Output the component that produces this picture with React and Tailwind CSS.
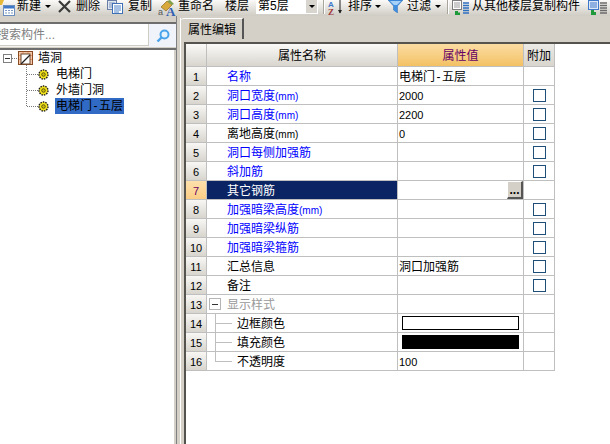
import React from "react";

const FONT = { fontFamily: '"Liberation Sans","Noto Sans CJK SC",sans-serif' };

function Caret({ className = "" }) {
  return <span className={"w-0 h-0 border-x-[3px] border-x-transparent border-t-[3px] border-t-black " + className} />;
}

function Sep({ className = "" }) {
  return <span className={"w-[2px] h-[14px] border-l border-[#a8a59c] bg-white " + className} />;
}

function NewIcon() {
  return (
    <svg width="15" height="16" viewBox="0 0 15 16" className="shrink-0">
      <path d="M0 0h4l-2 5H0z" fill="#e8b838" />
      <rect x="3.5" y="5.5" width="11" height="10" fill="#fff" stroke="#6d8fc0" />
      <rect x="4" y="6" width="10" height="2.5" fill="#3f78c8" />
      <path d="M5 10h2v1H5zM8 10h2v1H8zM11 10h2v1h-2zM5 12.500h2v1H5zM8 12.500h2v1H8zM11 12.500h2v1h-2z" fill="#7c97c4" />
    </svg>
  );
}

function XIcon() {
  return (
    <svg width="13" height="13" viewBox="0 0 13 13" className="shrink-0">
      <path d="M1 1l11 11M12 1L1 12" stroke="#3a3a3a" strokeWidth="2.200" />
    </svg>
  );
}

function CopyIcon() {
  return (
    <svg width="16" height="14" viewBox="0 0 16 14" className="shrink-0">
      <rect x="0.500" y="0.500" width="9" height="9" fill="#dfe6f2" stroke="#6a7fa6" />
      <path d="M2 3h6M2 5h6M2 7h4" stroke="#7f93b8" />
      <rect x="5.500" y="3.500" width="10" height="10" fill="#fff" stroke="#3f6fb5" />
      <path d="M7 6h7M7 8h7M7 10h7M7 12h5" stroke="#4f82c8" />
    </svg>
  );
}

function RenameIcon() {
  return (
    <svg width="18" height="16" viewBox="0 0 18 16" className="shrink-0">
      <path d="M3 7l6-6 5 4-6 6z" fill="#d8a93a" stroke="#8d6d24" strokeWidth="0.700" />
      <path d="M9 1l5 4 2-1-4-4z" fill="#7f9f4a" />
      <text x="0" y="15" fontSize="9" fill="#555" fontFamily="Liberation Sans">a</text>
      <text x="8" y="16" fontSize="13" fontWeight="700" fill="#2f5fb3" fontFamily="Liberation Serif">A</text>
    </svg>
  );
}

function SortIcon() {
  return (
    <svg width="15" height="15" viewBox="0 0 15 15" className="shrink-0">
      <text x="0" y="7" fontSize="8" fontWeight="700" fill="#3f78c8" fontFamily="Liberation Sans">A</text>
      <text x="0" y="15" fontSize="9" fontWeight="700" fill="#a03838" fontFamily="Liberation Serif">Z</text>
      <path d="M12 0v13" stroke="#222" />
      <path d="M10 10l2 3.500 2-3.500z" fill="#222" />
    </svg>
  );
}

function FunnelIcon() {
  return (
    <svg width="15" height="13" viewBox="0 0 15 13" className="shrink-0">
      <path d="M0 0h15L9.500 6v7L5.500 10V6z" fill="#3f8fe0" stroke="#2f6fb8" strokeWidth="0.500" />
      <path d="M2 1h11L9 5H6z" fill="#a7d2f7" />
    </svg>
  );
}

function FloorCopyIcon() {
  return (
    <svg width="18" height="15" viewBox="0 0 18 15" className="shrink-0">
      <rect x="0.500" y="0.500" width="9" height="9" fill="#fff" stroke="#7d7d7d" />
      <path d="M2 3h6M2 5h6M2 7h6" stroke="#9a9a9a" />
      <path d="M11 3h6M11 5.500h6M11 8h6M11 10.500h6M11 13h6" stroke="#2f6fc0" strokeWidth="1.400" />
      <path d="M3 11h3v1.500h2V15H3z" fill="#1e9a3a" />
    </svg>
  );
}

function FloorCopyIconGray() {
  return (
    <svg width="20" height="15" viewBox="0 0 20 15" className="shrink-0">
      <rect x="0.500" y="0.500" width="10" height="9" fill="#dce8f8" stroke="#3f78c8" />
      <path d="M2 3h7M2 5h7M2 7h7" stroke="#3f78c8" />
      <path d="M12 3h7M12 5.500h7M12 8h7M12 10.500h7M12 13h7" stroke="#6b6b6b" strokeWidth="1.400" />
      <path d="M3 10h3v2h2v3H3z" fill="#1e9a3a" />
    </svg>
  );
}

function Toolbar() {
  return (
    <div className="h-[16px] shrink-0 flex items-start overflow-hidden bg-gradient-to-b from-[#fbfaf8] to-[#cfccc4] text-[12px] leading-[12px] text-black whitespace-nowrap">
      <NewIcon />
      <span className="ml-[2px]">新建</span>
      <Caret className="ml-[4px] mt-[5px]" />
      <span className="ml-[7px]"><XIcon /></span>
      <span className="ml-[5px]">删除</span>
      <span className="ml-[7px]"><CopyIcon /></span>
      <span className="ml-[5px]">复制</span>
      <span className="ml-[6px]"><RenameIcon /></span>
      <span className="ml-[2px]">重命名</span>
      <span className="ml-[11px]">楼层</span>
      <div className="ml-[7px] w-[62px] h-[14px] bg-white flex border-r border-white">
        <span className="flex-1 pl-[2px]">第5层</span>
        <span className="w-[11px] h-[13px] bg-[#d8d5ce] flex items-center justify-center"><Caret /></span>
      </div>
      <Sep className="ml-[5px]" />
      <span className="ml-[3px]"><SortIcon /></span>
      <span className="ml-[5px]">排序</span>
      <Caret className="ml-[3px] mt-[5px]" />
      <span className="ml-[7px]"><FunnelIcon /></span>
      <span className="ml-[4px]">过滤</span>
      <Caret className="ml-[4px] mt-[5px]" />
      <Sep className="ml-[6px]" />
      <span className="ml-[3px]"><FloorCopyIcon /></span>
      <span className="ml-[2px]">从其他楼层复制构件</span>
      <span className="ml-[8px]"><FloorCopyIconGray /></span>
    </div>
  );
}

function Gear() {
  return (
    <svg width="11" height="11" viewBox="0 0 11 11" className="shrink-0">
      <circle cx="5.500" cy="5.500" r="4.500" fill="#f2e21c" stroke="#1c1c1c" strokeWidth="1.400" strokeDasharray="1.500 1" />
      <circle cx="5.500" cy="5.500" r="1.800" fill="#c9b90c" stroke="#4a4410" strokeWidth="0.800" />
    </svg>
  );
}

function WallIcon() {
  return (
    <svg width="15" height="14" viewBox="0 0 15 14" className="shrink-0">
      <rect x="0.500" y="0.500" width="14" height="13" fill="#f3c7a8" stroke="#8a4a22" />
      <path d="M1 4.500h13M1 8.500h13M5 1v12M10 1v12" stroke="#e88a50" strokeWidth="0.700" />
      <rect x="3" y="3" width="9" height="10" fill="#fff" stroke="#6a4a30" />
      <path d="M3 13l9-9" stroke="#222" strokeWidth="1.200" />
    </svg>
  );
}

function Hyphen() {
  return <span className="mx-[1.5px]">-</span>;
}

function TreeChild({ label, selected }) {
  return (
    <div className="h-[16px] flex items-center pl-[38px]">
      <Gear />
      <span className={"ml-[6px] h-[16px] px-px leading-[16px] text-[12px] text-black " + (selected ? "bg-[#316ac5]" : "")}>{label}</span>
    </div>
  );
}

function LeftPanel() {
  return (
    <div className="w-[176px] shrink-0 flex flex-col bg-[#d4d0c8]">
      <div className="h-[8px] shrink-0 border-b-2 border-[#6e6e6e]" />
      <div className="h-[23px] shrink-0 flex bg-[#f4f3ef]">
        <div className="w-[149px] h-[22px] bg-white overflow-hidden border-r border-b border-[#cfccc4] text-[12px] leading-[22px] text-[#808080] whitespace-nowrap">
          <span className="block -ml-[3px]">搜索构件...</span>
        </div>
        <div className="flex-1 flex items-center justify-center bg-[#f0f4fa]">
          <svg width="14" height="14" viewBox="0 0 14 14">
            <circle cx="8.500" cy="5.500" r="4" fill="#e6f3fd" stroke="#4aa3ea" strokeWidth="2" />
            <path d="M5.500 8.500L1.500 12.500" stroke="#4aa3ea" strokeWidth="2.400" />
          </svg>
        </div>
      </div>
      <div className="h-[3px] shrink-0 border-b-2 border-[#6e6e6e]" />
      <div className="relative flex-1 bg-white mr-[2px]">
        <svg className="absolute left-0 top-0" width="40" height="64">
          <rect x="3.500" y="4.500" width="8" height="8" fill="#fff" stroke="#808080" />
          <path d="M5 8.500h5" stroke="#333" />
          <path d="M12 8.500h6M26.500 15v41M27 24.500h11M27 40.500h11M27 56.500h11" stroke="#777" strokeDasharray="1 1" fill="none" />
        </svg>
        <div className="h-[16px] flex items-center pl-[18px]">
          <WallIcon />
          <span className="ml-[5px] text-[12px] leading-[16px] text-black">墙洞</span>
        </div>
        <TreeChild label="电梯门" />
        <TreeChild label="外墙门洞" />
        <TreeChild label={<>电梯门<Hyphen />五层</>} selected />
      </div>
    </div>
  );
}

function Mm() {
  return <span className="text-[10px] leading-none">(mm)</span>;
}

const rows = [
  { n: 1, name: "名称", blue: true, value: <>电梯门<Hyphen />五层</>, big: true },
  { n: 2, name: <>洞口宽度<Mm /></>, blue: true, value: "2000", check: true },
  { n: 3, name: <>洞口高度<Mm /></>, blue: true, value: "2200", check: true },
  { n: 4, name: <>离地高度<Mm /></>, value: "0", check: true },
  { n: 5, name: "洞口每侧加强筋", blue: true, check: true },
  { n: 6, name: "斜加筋", blue: true, check: true },
  { n: 7, name: "其它钢筋", selected: true },
  { n: 8, name: <>加强暗梁高度<Mm /></>, blue: true, check: true },
  { n: 9, name: "加强暗梁纵筋", blue: true, check: true },
  { n: 10, name: "加强暗梁箍筋", blue: true, check: true },
  { n: 11, name: "汇总信息", value: "洞口加强筋", big: true, check: true },
  { n: 12, name: "备注", check: true },
  { n: 13, name: "显示样式", group: true },
  { n: 14, name: "边框颜色", sub: true, swatch: "white" },
  { n: 15, name: "填充颜色", sub: true, swatch: "black" },
  { n: 16, name: "不透明度", sub: true, value: "100", last: true },
];

function Row({ r }) {
  return (
    <div className="grid grid-cols-[21px_191px_126px_31px] text-[12px] leading-[20px]">
      <div className={"h-[19px] border-b border-r border-[#bfbfbf] text-center text-[11px] " + (r.selected ? "bg-gradient-to-b from-[#fde0ac] to-[#fbcd85] text-[#660066]" : "bg-gradient-to-b from-[#f8f7f4] to-[#d8d5ce] text-black")}>
        {r.n}
      </div>
      <div className={"relative h-[19px] border-b border-r border-[#bfbfbf] whitespace-nowrap " + (r.selected ? "bg-[#0a2464] text-white pl-[20px]" : r.blue ? "text-[#0000ff] pl-[20px]" : r.group ? "text-[#999999] pl-[20px]" : r.sub ? "text-black pl-[30px]" : "text-black pl-[20px]")}>
        {r.group && (
          <span className="absolute left-[2px] top-[3px] w-[12px] h-[12px] border border-[#b5b5b5] bg-white flex items-center justify-center">
            <span className="w-[6px] h-px bg-[#333]" />
          </span>
        )}
        {r.sub && <span className={"absolute left-[8px] top-0 w-px bg-[#bfbfbf] " + (r.last ? "h-[10px]" : "h-[19px]")} />}
        {r.sub && <span className="absolute left-[8px] top-[9px] w-[17px] h-px bg-[#bfbfbf]" />}
        {r.name}
      </div>
      <div className={"relative h-[19px] border-b border-r border-[#bfbfbf] bg-white pl-[1px] text-black " + (r.big ? "" : "text-[11px]")}>
        {r.value}
        {r.selected && (
          <span className="absolute right-0 top-0 w-[16px] h-[18px] bg-[#d4d0c8] border-t border-l border-t-white border-l-white border-r-2 border-b-2 border-r-[#555] border-b-[#555] flex items-center justify-center text-[12px] font-bold leading-[10px]">
            ...
          </span>
        )}
        {r.swatch === "white" && <span className="absolute left-[4px] top-[2px] right-[4px] h-[14px] bg-white border border-black" />}
        {r.swatch === "black" && <span className="absolute left-[4px] top-[2px] right-[4px] h-[14px] bg-black" />}
      </div>
      <div className="h-[19px] border-b border-r border-[#bfbfbf] bg-white flex items-center justify-center">
        {r.check && <span className="block w-[13px] h-[13px] border border-[#1f4e79] bg-white" />}
      </div>
    </div>
  );
}

function PropertyTable() {
  return (
    <div className="w-[369px] text-black">
      <div className="grid grid-cols-[21px_191px_126px_31px] text-[12px] leading-[24px] text-center">
        <div className="h-[23px] border-b border-r border-[#bfbfbf] bg-gradient-to-b from-[#fbfaf8] to-[#d8d5ce]" />
        <div className="h-[23px] border-b border-r border-[#bfbfbf] bg-gradient-to-b from-[#fbfaf8] to-[#d8d5ce]">属性名称</div>
        <div className="h-[23px] border-b border-r border-[#bfbfbf] bg-gradient-to-b from-[#fbdca2] to-[#f3c163] text-[#660066]">属性值</div>
        <div className="h-[23px] border-b border-r border-[#bfbfbf] bg-gradient-to-b from-[#eceae5] to-[#d8d5ce]">附加</div>
      </div>
      {rows.map((r) => <Row key={r.n} r={r} />)}
    </div>
  );
}

function RightPanel() {
  return (
    <div className="flex-1 min-w-0 flex bg-[#d4d0c8] border-l border-[#808080] pl-[3px]">
      <div className="flex-1 min-w-0 mt-[2px] flex flex-col border-l border-white">
        <div className="h-[24px] shrink-0 flex items-start">
          <div className="h-[21px] w-[63px] bg-[#d4d0c8] border-t border-white border-r-2 border-r-[#555] rounded-tl-[3px] text-[12px] leading-[22px] text-black pl-[7px]">
            属性编辑
          </div>
        </div>
        <div className="flex-1 min-h-0 flex ml-[3px] border-t-2 border-l-2 border-[#55534e] bg-white">
          <PropertyTable />
        </div>
      </div>
    </div>
  );
}

export default function App() {
  return (
    <div style={FONT} className="w-[610px] h-[444px] overflow-hidden flex flex-col bg-[#d4d0c8]">
      <Toolbar />
      <div className="flex-1 min-h-0 flex">
        <LeftPanel />
        <RightPanel />
      </div>
    </div>
  );
}
